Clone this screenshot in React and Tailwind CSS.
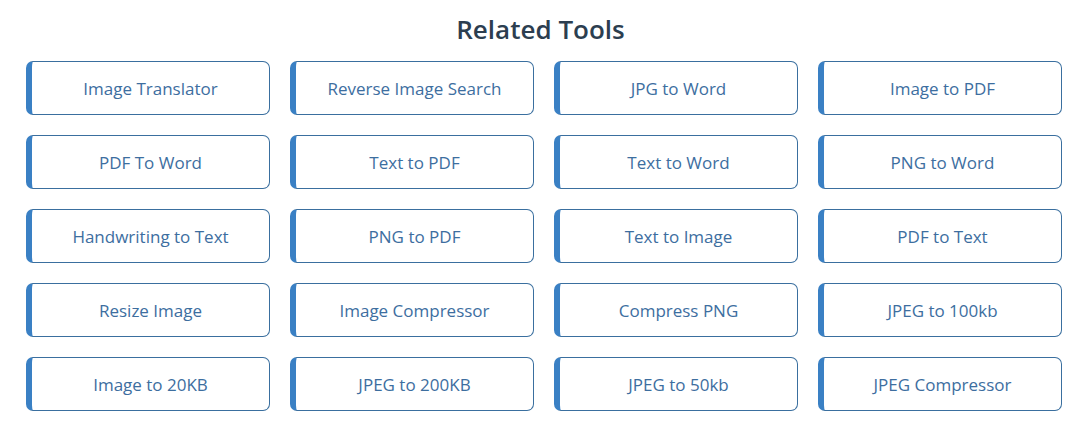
const tools = [
  "Image Translator",
  "Reverse Image Search",
  "JPG to Word",
  "Image to PDF",
  "PDF To Word",
  "Text to PDF",
  "Text to Word",
  "PNG to Word",
  "Handwriting to Text",
  "PNG to PDF",
  "Text to Image",
  "PDF to Text",
  "Resize Image",
  "Image Compressor",
  "Compress PNG",
  "JPEG to 100kb",
  "Image to 20KB",
  "JPEG to 200KB",
  "JPEG to 50kb",
  "JPEG Compressor",
];

const App = () => {
  return (
    <section
      aria-label="Related tools"
      className="w-full bg-white pt-[10px] pb-[16px]"
      style={{ fontFamily: '"Open Sans", "Noto Sans", sans-serif' }}
    >
      <h2 className="text-center font-semibold text-[26px] leading-[38px] text-[#2c3e50] mb-[13px]">
        Related Tools
      </h2>
      <div className="ml-[26px] w-[1036px] grid grid-cols-4 gap-x-[20px] gap-y-[20px]">
        {tools.map((t) => (
          <a
            key={t}
            href="#"
            className="h-[54px] flex items-center justify-center pt-[2px] rounded-[7px] border border-[#3a6f9f] border-l-[6px] border-l-[#3a80c4] text-[17px] text-[#3d6e9f] bg-white"
          >
            {t}
          </a>
        ))}
      </div>
    </section>
  );
};

export default App;
